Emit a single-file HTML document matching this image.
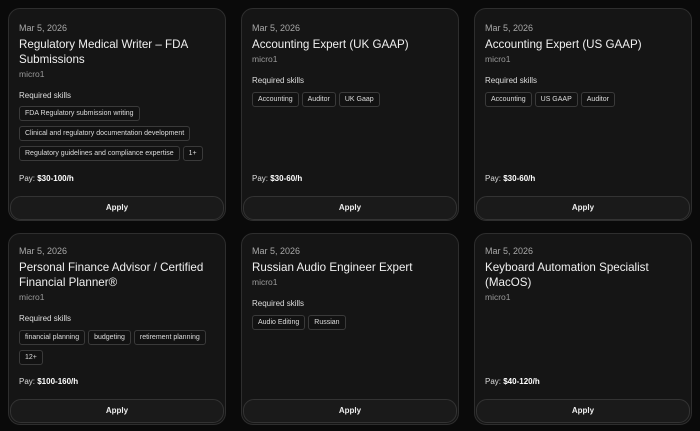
<html><head><style>
body{margin:0;width:700px;height:431px;background:#0a0a0a;font-family:"Liberation Sans",sans-serif;color:#e8e8e8;position:relative;overflow:hidden}
.c{position:absolute;width:218px;background:#151515;border:1px solid #2e2e2e;border-radius:12px;box-sizing:border-box}
.a{position:absolute;}
.d{font-size:9px;color:#a8a8a8;left:10px}
.t{font-size:11.6px;line-height:15px;color:#f0f0f0;left:10px;width:200px}
.m{font-size:8.5px;color:#9a9a9a;left:10px}
.r{font-size:8px;color:#ddd;left:10px}
.ch{display:inline-block;font-size:7px;color:#ddd;border:1px solid #3a3a3a;border-radius:3px;padding:3px 5px;margin:0 3px 5px 0;background:#121212}
.chips{left:10px;width:205px}
.p{font-size:8px;color:#ddd;left:10px}
.p b{color:#fff}
.b{left:1px;right:1px;height:22px;border:1px solid #333;border-radius:11px;background:#1a1a1a;font-size:8px;font-weight:bold;text-align:center;line-height:22px;color:#eee}
</style></head><body>

<div class="c" style="left:8px;top:8px;height:213px">
<div class="a d" style="top:14px">Mar 5, 2026</div>
<div class="a t" style="top:28px">Regulatory Medical Writer – FDA Submissions</div>
<div class="a m" style="top:60px">micro1</div>
<div class="a r" style="top:82px">Required skills</div>
<div class="a chips" style="top:97px"><span class="ch">FDA Regulatory submission writing</span><br><span class="ch">Clinical and regulatory documentation development</span><br><span class="ch">Regulatory guidelines and compliance expertise</span><span class="ch">1+</span></div>
<div class="a p" style="top:165px">Pay: <b>$30-100/h</b></div>
<div class="a b" style="top:187px">Apply</div>
</div>

<div class="c" style="left:241px;top:8px;height:213px">
<div class="a d" style="top:14px">Mar 5, 2026</div>
<div class="a t" style="top:28px">Accounting Expert (UK GAAP)</div>
<div class="a m" style="top:45px">micro1</div>
<div class="a r" style="top:67px">Required skills</div>
<div class="a chips" style="top:83px"><span class="ch">Accounting</span><span class="ch">Auditor</span><span class="ch">UK Gaap</span></div>
<div class="a p" style="top:165px">Pay: <b>$30-60/h</b></div>
<div class="a b" style="top:187px">Apply</div>
</div>

<div class="c" style="left:474px;top:8px;height:213px">
<div class="a d" style="top:14px">Mar 5, 2026</div>
<div class="a t" style="top:28px">Accounting Expert (US GAAP)</div>
<div class="a m" style="top:45px">micro1</div>
<div class="a r" style="top:67px">Required skills</div>
<div class="a chips" style="top:83px"><span class="ch">Accounting</span><span class="ch">US GAAP</span><span class="ch">Auditor</span></div>
<div class="a p" style="top:165px">Pay: <b>$30-60/h</b></div>
<div class="a b" style="top:187px">Apply</div>
</div>

<div class="c" style="left:8px;top:233px;height:192px">
<div class="a d" style="top:12px">Mar 5, 2026</div>
<div class="a t" style="top:26px">Personal Finance Advisor / Certified Financial Planner®</div>
<div class="a m" style="top:58px">micro1</div>
<div class="a r" style="top:80px">Required skills</div>
<div class="a chips" style="top:96px"><span class="ch">financial planning</span><span class="ch">budgeting</span><span class="ch">retirement planning</span><br><span class="ch">12+</span></div>
<div class="a p" style="top:143px">Pay: <b>$100-160/h</b></div>
<div class="a b" style="top:165px">Apply</div>
</div>

<div class="c" style="left:241px;top:233px;height:192px">
<div class="a d" style="top:12px">Mar 5, 2026</div>
<div class="a t" style="top:26px">Russian Audio Engineer Expert</div>
<div class="a m" style="top:43px">micro1</div>
<div class="a r" style="top:65px">Required skills</div>
<div class="a chips" style="top:81px"><span class="ch">Audio Editing</span><span class="ch">Russian</span></div>
<div class="a b" style="top:165px">Apply</div>
</div>

<div class="c" style="left:474px;top:233px;height:192px">
<div class="a d" style="top:12px">Mar 5, 2026</div>
<div class="a t" style="top:26px">Keyboard Automation Specialist (MacOS)</div>
<div class="a m" style="top:58px">micro1</div>
<div class="a p" style="top:143px">Pay: <b>$40-120/h</b></div>
<div class="a b" style="top:165px">Apply</div>
</div>

</body></html>
